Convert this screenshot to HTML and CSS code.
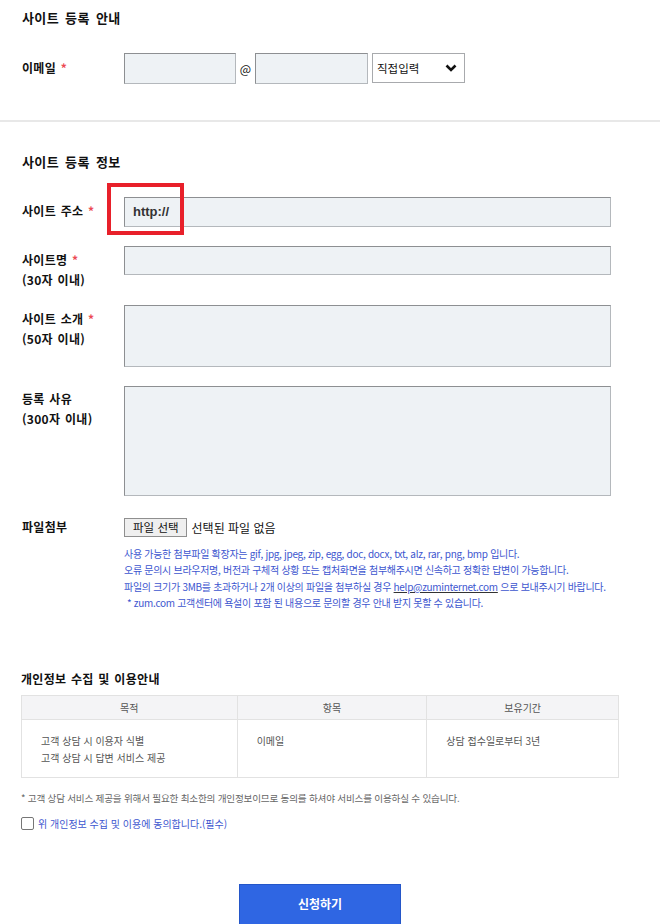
FILE: index.html
```html
<!DOCTYPE html>
<html lang="ko">
<head>
<meta charset="utf-8">
<link rel="stylesheet" href="styles.css">
</head>
<body>
<div class="page">
  <section class="sec sec-guide">
    <h2 class="sec-title">사이트 등록 안내</h2>
    <div class="row row-email">
      <div class="label">이메일 <span class="req">*</span></div>
      <div class="field email-field">
        <div class="inp inp-email"></div>
        <span class="at">@</span>
        <div class="inp inp-email2"></div>
        <div class="select">
          <span>직접입력</span>
          <svg class="chev" width="12" height="8" viewBox="0 0 12 8"><polyline points="1.5,1.5 6,6 10.5,1.5" fill="none" stroke="#111" stroke-width="2.6"/></svg>
        </div>
      </div>
    </div>
  </section>
  <div class="divider"></div>
  <section class="sec sec-info">
    <h2 class="sec-title">사이트 등록 정보</h2>
    <div class="row row-url">
      <div class="label">사이트 주소 <span class="req">*</span></div>
      <div class="field">
        <div class="inp inp-wide inp-url">http://</div>
      </div>
      <div class="highlight"></div>
    </div>
    <div class="row row-name">
      <div class="label">사이트명 <span class="req">*</span><br>(30자 이내)</div>
      <div class="field"><div class="inp inp-wide"></div></div>
    </div>
    <div class="row row-intro">
      <div class="label">사이트 소개 <span class="req">*</span><br>(50자 이내)</div>
      <div class="field"><div class="inp inp-wide ta-intro"></div></div>
    </div>
    <div class="row row-reason">
      <div class="label">등록 사유<br>(300자 이내)</div>
      <div class="field"><div class="inp inp-wide ta-reason"></div></div>
    </div>
    <div class="row row-file">
      <div class="label">파일첨부</div>
      <div class="field">
        <div class="file-line"><span class="file-btn">파일 선택</span><span class="file-none">선택된 파일 없음</span></div>
        <div class="notes">
          <p>사용 가능한 첨부파일 확장자는 gif, jpg, jpeg, zip, egg, doc, docx, txt, alz, rar, png, bmp 입니다.</p>
          <p>오류 문의시 브라우저명, 버전과 구체적 상황 또는 캡처화면을 첨부해주시면 신속하고 정확한 답변이 가능합니다.</p>
          <p>파일의 크기가 3MB를 초과하거나 2개 이상의 파일을 첨부하실 경우 <u>help@zuminternet.com</u> 으로 보내주시기 바랍니다.</p>
          <p class="star">* zum.com 고객센터에 욕설이 포함 된 내용으로 문의할 경우 안내 받지 못할 수 있습니다.</p>
        </div>
      </div>
    </div>
  </section>
  <section class="privacy">
    <h3 class="pv-title">개인정보 수집 및 이용안내</h3>
    <table class="pv-table">
      <thead>
        <tr><th class="c1">목적</th><th class="c2">항목</th><th class="c3">보유기간</th></tr>
      </thead>
      <tbody>
        <tr>
          <td>고객 상담 시 이용자 식별<br>고객 상담 시 답변 서비스 제공</td>
          <td>이메일</td>
          <td>상담 접수일로부터 3년</td>
        </tr>
      </tbody>
    </table>
    <p class="pv-note">* 고객 상담 서비스 제공을 위해서 필요한 최소한의 개인정보이므로 동의를 하셔야 서비스를 이용하실 수 있습니다.</p>
    <label class="agree"><span class="cb"></span><span class="agree-text">위 개인정보 수집 및 이용에 동의합니다.(필수)</span></label>
  </section>
  <div class="submit-wrap"><button class="submit">신청하기</button></div>
</div>
</body>
</html>
```
FILE: styles.css
```css
* { box-sizing: border-box; }
html, body { margin: 0; padding: 0; background: #fff; }
body {
  font-family: "Noto Sans CJK KR", "Noto Sans", sans-serif;
  color: #111;
  overflow: hidden;
  height: 924px;
}
.page { width: 660px; }
.sec { padding: 0 22px; }
.sec-title {
  margin: 0;
  font-size: 13px;
  font-weight: 700;
  line-height: 20px;
  letter-spacing: 0.4px;
  word-spacing: 2px;
}
.sec-guide { padding-top: 8px; }
.row { display: flex; align-items: flex-start; position: relative; }
.label {
  width: 102px;
  flex: none;
  font-size: 12px;
  font-weight: 700;
  line-height: 20px;
  letter-spacing: 0.3px;
  word-spacing: 1px;
}
.req { color: #ec4a55; font-weight: 700; }
.field { flex: 1; }
.inp {
  background: #eef2f5;
  border: 1px solid #b4b8bc;
  border-top-color: #8d8f92;
  border-left-color: #8d8f92;
}
.row-email { margin-top: 25px; }
.row-email .label { padding-top: 5px; }
.email-field { display: flex; align-items: flex-start; }
.inp-email { width: 112px; height: 31px; }
.inp-email2 { width: 113px; height: 31px; }
.at { width: 19px; text-align: center; font-size: 12px; line-height: 31px; }
.select {
  margin-left: 4px;
  width: 93px;
  height: 30px;
  border: 1px solid #a8aaad;
  background: #fff;
  display: flex;
  align-items: center;
  justify-content: space-between;
  padding: 0 7px 0 4px;
  font-size: 11.5px;
}
.divider { height: 2px; background: #e8e8e8; margin-top: 36px; }
.sec-info { padding-top: 30px; }
.inp-wide { width: 487px; height: 30px; }
.row-url { margin-top: 25px; }
.row-url .label { padding-top: 4px; }
.inp-url {
  font-family: "Liberation Sans", Arial, sans-serif;
  font-size: 13px;
  font-weight: 700;
  color: #333;
  line-height: 28px;
  padding-left: 8px;
}
.highlight {
  position: absolute;
  left: 85px;
  top: -14px;
  width: 77px;
  height: 52px;
  border: 4px solid #e8202a;
}
.row-name { margin-top: 19px; }
.row-name .inp-wide { height: 29px; }
.row-name .label { padding-top: 4px; }
.row-intro { margin-top: 15px; }
.row-intro .label { padding-top: 4px; }
.ta-intro { height: 62px; }
.row-reason { margin-top: 19px; }
.row-reason .label { padding-top: 3px; }
.ta-reason { height: 110px; }
.row-file { margin-top: 22px; }
.row-file .label { padding-top: 0; line-height: 18px; }
.file-line { display: flex; align-items: center; font-size: 12px; }
.file-btn {
  display: inline-block;
  height: 19px;
  line-height: 17px;
  padding: 0 7px 0 8px;
  border: 1px solid #8f8f8f;
  background: #efefef;
  font-size: 11.5px;
  color: #111;
}
.file-none { margin-left: 5px; }
.notes { margin-top: 9px; color: #3d56cf; font-size: 10px; line-height: 16.4px; letter-spacing: -0.3px; }
.notes p { margin: 0; white-space: nowrap; }
.notes u { text-decoration-color: #333; color: #3d56cf; }
.notes .star { padding-left: 3px; }
.privacy { padding: 0 21px; margin-top: 58px; }
.pv-title {
  margin: 0;
  font-size: 12px;
  font-weight: 700;
  line-height: 18px;
  letter-spacing: 0.3px;
  word-spacing: 1px;
}
.pv-table {
  margin-top: 7px;
  width: 598px;
  border-collapse: collapse;
  border: 1px solid #e2e2e2;
  font-size: 10px;
  color: #555;
}
.pv-table th, .pv-table td { border: 1px solid #e2e2e2; }
.pv-table th {
  background: #f4f4f6;
  height: 24px;
  font-weight: 400;
  text-align: center;
  padding: 0;
}
.c1 { width: 216px; }
.c2 { width: 190px; }
.c3 { width: 192px; }
.pv-table td {
  height: 58px;
  vertical-align: top;
  padding: 12px 0 0 19px;
  line-height: 17px;
}
.pv-note { margin: 12px 0 0 0; font-size: 9.6px; color: #666; line-height: 16px; letter-spacing: -0.2px; }
.agree { display: flex; align-items: center; margin-top: 11px; }
.cb {
  width: 13px; height: 13px;
  border: 1px solid #767676;
  border-radius: 2px;
  background: #fff;
  flex: none;
}
.agree-text { margin-left: 4px; font-size: 10px; color: #3d56cf; line-height: 14px; }
.submit-wrap { display: flex; justify-content: center; width: 640px; margin-top: 53px; }
.submit {
  width: 162px;
  height: 44px;
  background: #2f66e3;
  border: 1px solid #2456c8;
  color: #fff;
  font-family: "Noto Sans CJK KR", sans-serif;
  font-size: 12px;
  font-weight: 700;
  padding: 0 0 4px 0;
}
```
